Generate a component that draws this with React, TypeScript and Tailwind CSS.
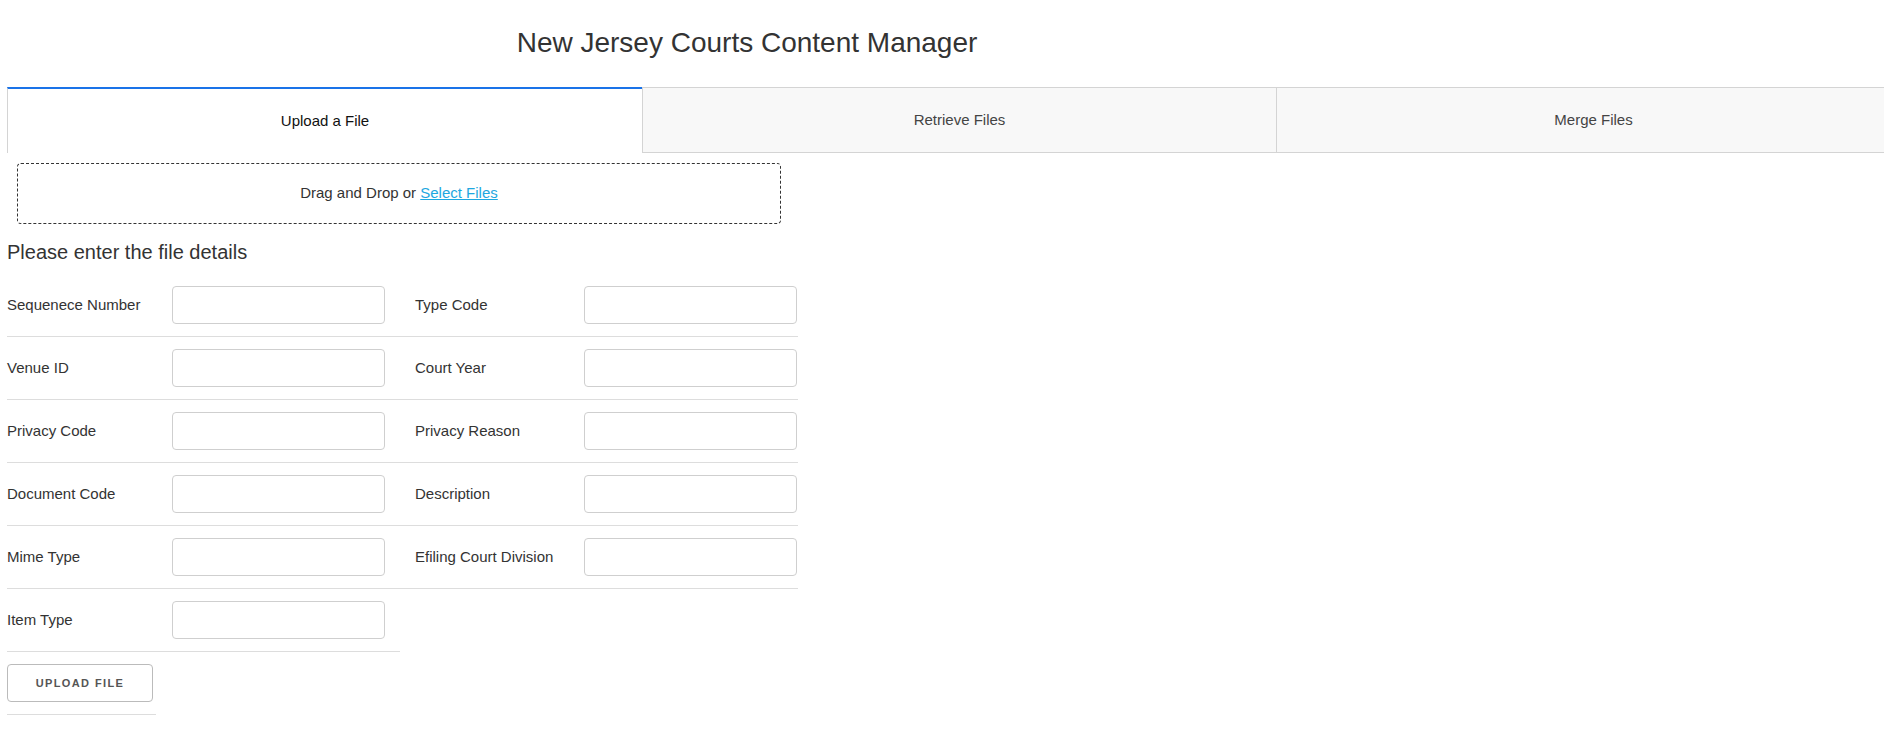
import { useState } from "react";

type Field = { label: string; key: string };

const rows: Field[][] = [
  [
    { label: "Sequenece Number", key: "seq" },
    { label: "Type Code", key: "typeCode" },
  ],
  [
    { label: "Venue ID", key: "venue" },
    { label: "Court Year", key: "courtYear" },
  ],
  [
    { label: "Privacy Code", key: "privacyCode" },
    { label: "Privacy Reason", key: "privacyReason" },
  ],
  [
    { label: "Document Code", key: "docCode" },
    { label: "Description", key: "description" },
  ],
  [
    { label: "Mime Type", key: "mime" },
    { label: "Efiling Court Division", key: "division" },
  ],
  [{ label: "Item Type", key: "itemType" }],
];

const tabs = ["Upload a File", "Retrieve Files", "Merge Files"];

export default function App() {
  const [activeTab, setActiveTab] = useState(0);
  const [values, setValues] = useState<Record<string, string>>({});

  return (
    <div className="w-full min-h-screen overflow-hidden bg-white text-[#333] font-['Liberation_Sans',Arial,sans-serif]">
      {/* HEADER */}
      <h1 className="w-[1494px] pt-[27px] mb-[28px] text-center text-[28px] leading-[32px] font-normal text-[#333]">
        New Jersey Courts Content Manager
      </h1>

      {/* TABS */}
      <div className="flex ml-[7px] w-[1905px]">
        {tabs.map((tab, i) => (
          <button
            key={tab}
            onClick={() => setActiveTab(i)}
            className={
              i === activeTab
                ? "w-[635px] shrink-0 h-[66px] border-l border-[#d4d4d4] border-t-2 border-t-[#1a73e8] bg-white text-[15px] text-[#111]"
                : "w-[634px] shrink-0 h-[66px] border-l border-t border-b border-[#d4d4d4] bg-[#f8f8f8] text-[15px] text-[#444]"
            }
          >
            {tab}
          </button>
        ))}
      </div>

      <div className="px-[7px]">
        {/* DROP ZONE */}
        <div className="ml-[10px] mt-[10px] w-[764px] h-[61px] flex items-center justify-center border border-dashed border-[#333] rounded-[4px] text-[15px] text-[#333]">
          <span>
            Drag and Drop or{" "}
            <a href="#" className="text-[#1ea7e0] underline">
              Select Files
            </a>
          </span>
        </div>

        <h2 className="mt-[16px] mb-[10px] text-[20px] leading-[24px] font-normal text-[#333]">
          Please enter the file details
        </h2>

        {/* FORM */}
        {rows.map((row, r) => (
          <div key={r} className="flex">
            {row.map((f, c) => (
              <div
                key={f.key}
                className={
                  c === 0
                    ? "w-[393px] flex items-center py-[12px] border-b border-[#dddddd]"
                    : "w-[398px] flex items-center pl-[15px] py-[12px] border-b border-[#dddddd]"
                }
              >
                <label className={c === 0 ? "w-[165px] text-[15px] text-[#333]" : "w-[169px] text-[15px] text-[#333]"}>
                  {f.label}
                </label>
                <input
                  value={values[f.key] ?? ""}
                  onChange={(e) => setValues({ ...values, [f.key]: e.target.value })}
                  className="w-[213px] h-[38px] px-2 border border-[#cfcfcf] rounded-[4px] bg-white outline-none"
                />
              </div>
            ))}
          </div>
        ))}

        {/* UPLOAD BUTTON */}
        <div className="w-[149px] py-[12px] border-b border-[#dddddd]">
          <button className="w-[146px] h-[38px] border border-[#bbbbbb] rounded-[4px] bg-white text-[11px] font-bold tracking-[1.4px] text-[#555]">
            UPLOAD FILE
          </button>
        </div>
      </div>
    </div>
  );
}
